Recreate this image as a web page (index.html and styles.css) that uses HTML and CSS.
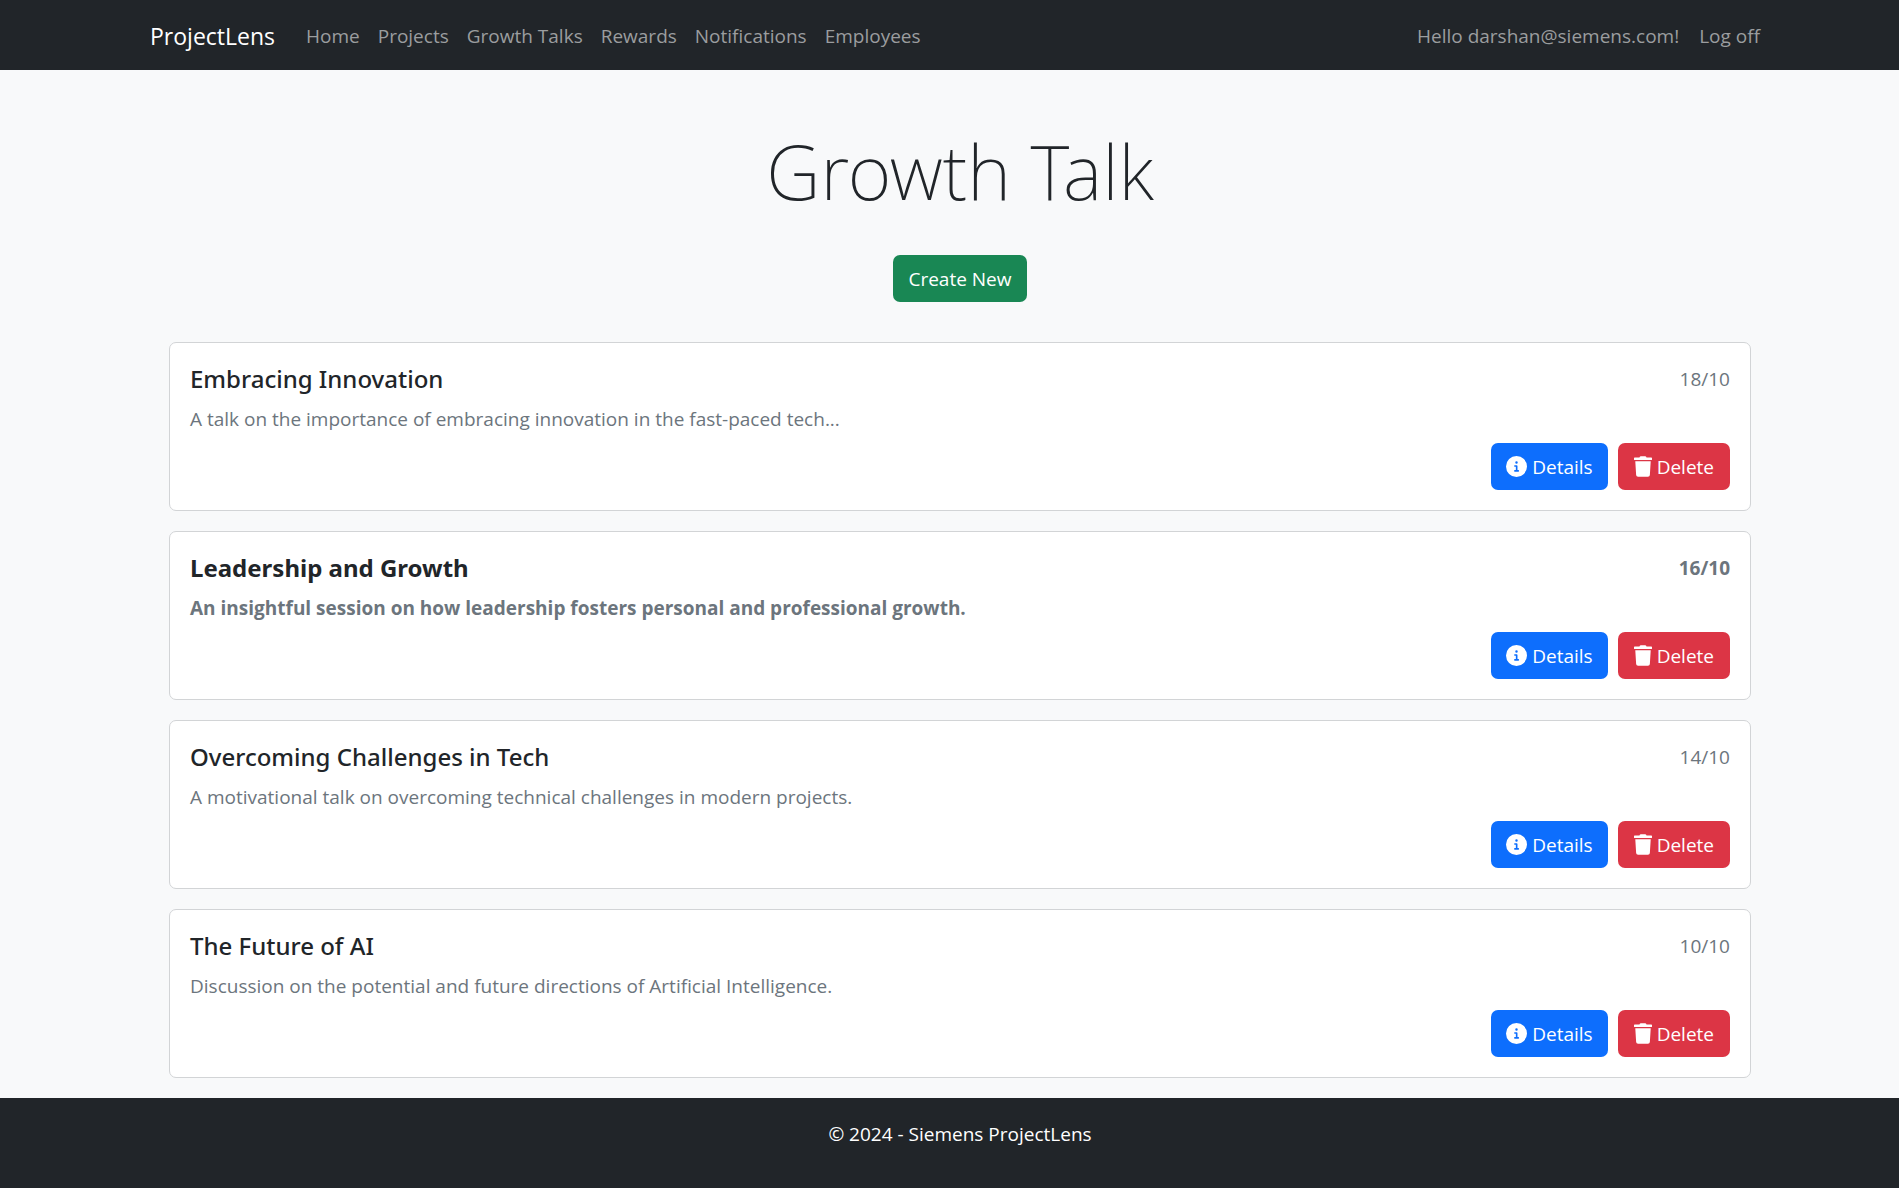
FILE: index.html
```html
<!DOCTYPE html>
<html lang="en">
<head>
<meta charset="utf-8">
<meta name="viewport" content="width=device-width, initial-scale=1">
<title>Growth Talk - ProjectLens</title>
<link rel="stylesheet" href="styles.css">
</head>
<body>
<svg class="sprite" aria-hidden="true">
  <symbol id="info" viewBox="0 0 512 512"><path d="M256 512A256 256 0 1 0 256 0a256 256 0 1 0 0 512zM216 344h24V264H216c-11 0-20-9-20-20s9-20 20-20h44c11 0 20 9 20 20v100h20c11 0 20 9 20 20s-9 20-20 20H216c-11 0-20-9-20-20s9-20 20-20zm40-216a30 30 0 1 1 0 60 30 30 0 1 1 0-60z"/></symbol>
  <symbol id="trash" viewBox="0 0 448 512"><path d="M432 32H312l-9.4-18.7A24 24 0 0 0 281.1 0H166.8a23.72 23.72 0 0 0-21.4 13.3L136 32H16A16 16 0 0 0 0 48v32a16 16 0 0 0 16 16h416a16 16 0 0 0 16-16V48a16 16 0 0 0-16-16zM53.2 467a48 48 0 0 0 47.9 45h245.8a48 48 0 0 0 47.9-45L416 128H32z"/></symbol>
</svg>
<header class="topbar">
  <nav class="container nav" aria-label="Main">
    <a class="brand" href="#">ProjectLens</a>
    <ul class="menu">
      <li><a href="#">Home</a></li>
      <li><a href="#">Projects</a></li>
      <li><a href="#">Growth Talks</a></li>
      <li><a href="#">Rewards</a></li>
      <li><a href="#">Notifications</a></li>
      <li><a href="#">Employees</a></li>
    </ul>
    <ul class="menu account">
      <li><a href="#">Hello darshan@siemens.com!</a></li>
      <li><a href="#">Log off</a></li>
    </ul>
  </nav>
</header>
<main class="container">
  <h1 class="title">Growth Talk</h1>
  <div class="create"><a class="btn btn-create" href="#">Create New</a></div>
  <div class="talks">
    <article class="card">
      <div class="card-head"><h2>Embracing Innovation</h2><span class="date">18/10</span></div>
      <p>A talk on the importance of embracing innovation in the fast-paced tech...</p>
      <div class="actions">
        <a class="btn btn-details" href="#"><svg class="icon-info"><use href="#info"/></svg>Details</a>
        <button type="button" class="btn btn-delete"><svg class="icon-trash"><use href="#trash"/></svg>Delete</button>
      </div>
    </article>
    <article class="card unread">
      <div class="card-head"><h2>Leadership and Growth</h2><span class="date">16/10</span></div>
      <p>An insightful session on how leadership fosters personal and professional growth.</p>
      <div class="actions">
        <a class="btn btn-details" href="#"><svg class="icon-info"><use href="#info"/></svg>Details</a>
        <button type="button" class="btn btn-delete"><svg class="icon-trash"><use href="#trash"/></svg>Delete</button>
      </div>
    </article>
    <article class="card">
      <div class="card-head"><h2>Overcoming Challenges in Tech</h2><span class="date">14/10</span></div>
      <p>A motivational talk on overcoming technical challenges in modern projects.</p>
      <div class="actions">
        <a class="btn btn-details" href="#"><svg class="icon-info"><use href="#info"/></svg>Details</a>
        <button type="button" class="btn btn-delete"><svg class="icon-trash"><use href="#trash"/></svg>Delete</button>
      </div>
    </article>
    <article class="card">
      <div class="card-head"><h2>The Future of AI</h2><span class="date">10/10</span></div>
      <p>Discussion on the potential and future directions of Artificial Intelligence.</p>
      <div class="actions">
        <a class="btn btn-details" href="#"><svg class="icon-info"><use href="#info"/></svg>Details</a>
        <button type="button" class="btn btn-delete"><svg class="icon-trash"><use href="#trash"/></svg>Delete</button>
      </div>
    </article>
  </div>
</main>
<footer class="footer">
  <p class="container">© 2024 - Siemens ProjectLens</p>
</footer>
</body>
</html>
```
FILE: styles.css
```css
* { box-sizing: border-box; }

body {
  display: flex;
  flex-direction: column;
  min-height: 100vh;
  margin: 0;
  background: #f8f9fa;
  color: #212529;
  font-family: "Segoe UI", "Open Sans", "Noto Sans", sans-serif;
  font-size: 19px;
  line-height: 30px;
}

h1, h2, p, ul { margin: 0; padding: 0; }
a { color: inherit; text-decoration: none; }
.sprite { display: none; }

.topbar, main, .footer { padding-left: 21px; }

.container {
  width: 100%;
  max-width: 1671px;
  margin: 0 auto;
}

.topbar, .footer { background: #212529; }

.nav {
  display: flex;
  align-items: center;
  max-width: 1650px;
  height: 70px;
  padding: 2px 15px 0;
}

.brand {
  margin-right: 22px;
  color: #fff;
  font-size: 23px;
}

.menu {
  display: flex;
  list-style: none;
  color: #9b9d9f;
}

.menu a { padding: 10px 9px; }
.menu.account { margin-left: auto; }
.menu.account a { padding: 10px; }

.title {
  padding-top: 53px;
  font-family: "Segoe UI", "Noto Sans", sans-serif;
  font-size: 75px;
  font-weight: 250;
  line-height: 96px;
  text-align: center;
}

.create {
  display: flex;
  justify-content: center;
  padding: 36px 0 40px;
}

.btn {
  display: inline-flex;
  align-items: center;
  justify-content: center;
  gap: 5px;
  height: 47px;
  padding: 0 15px;
  border: 0;
  border-radius: 7px;
  color: #fff;
  font: inherit;
  font-weight: 400;
}

.btn svg { height: 21px; fill: currentColor; }
.icon-info { width: 21px; }
.icon-trash { width: 18px; }
.btn-create { background: #198754; }
.btn-details { background: #0d6efd; }
.btn-delete { padding: 0 16px; background: #dc3545; }

.talks {
  display: grid;
  gap: 20px;
  padding: 0 34px 20px;
}

.card {
  padding: 21px 20px 20px;
  border: 1px solid #d2d4d6;
  border-radius: 7px;
  background: #fff;
}

.card-head {
  display: flex;
  align-items: center;
  justify-content: space-between;
  margin-bottom: 10px;
}

.card h2 {
  font-family: "Segoe UI", "Noto Sans", sans-serif;
  font-size: 24px;
  font-weight: 500;
  line-height: 30px;
}

.card p, .date { color: #6c757d; }

.actions {
  display: flex;
  justify-content: flex-end;
  gap: 10px;
  margin-top: 9px;
}

.card.unread h2, .unread p, .unread .date { font-weight: 700; }

.footer {
  flex: 1;
  padding-top: 21px;
  padding-bottom: 20px;
  color: #fff;
  text-align: center;
}
```
